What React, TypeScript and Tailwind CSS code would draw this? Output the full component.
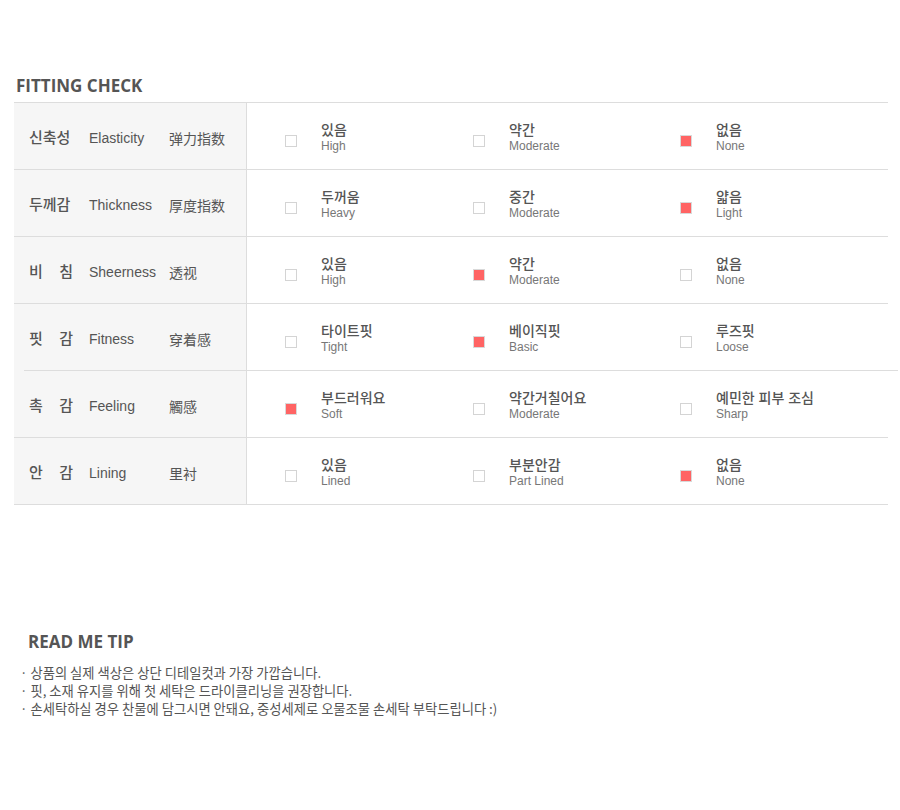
const rows = [
  {
    ko: "신축성",
    en: "Elasticity",
    zh: "弹力指数",
    opts: [
      { ko: "있음", en: "High" },
      { ko: "약간", en: "Moderate" },
      { ko: "없음", en: "None" },
    ],
    pick: 2,
  },
  {
    ko: "두께감",
    en: "Thickness",
    zh: "厚度指数",
    opts: [
      { ko: "두꺼움", en: "Heavy" },
      { ko: "중간", en: "Moderate" },
      { ko: "얇음", en: "Light" },
    ],
    pick: 2,
  },
  {
    ko: "비 침",
    en: "Sheerness",
    zh: "透视",
    opts: [
      { ko: "있음", en: "High" },
      { ko: "약간", en: "Moderate" },
      { ko: "없음", en: "None" },
    ],
    pick: 1,
  },
  {
    ko: "핏 감",
    en: "Fitness",
    zh: "穿着感",
    opts: [
      { ko: "타이트핏", en: "Tight" },
      { ko: "베이직핏", en: "Basic" },
      { ko: "루즈핏", en: "Loose" },
    ],
    pick: 1,
  },
  {
    ko: "촉 감",
    en: "Feeling",
    zh: "觸感",
    opts: [
      { ko: "부드러워요", en: "Soft" },
      { ko: "약간거칠어요", en: "Moderate" },
      { ko: "예민한 피부 조심", en: "Sharp" },
    ],
    pick: 0,
  },
  {
    ko: "안 감",
    en: "Lining",
    zh: "里衬",
    opts: [
      { ko: "있음", en: "Lined" },
      { ko: "부분안감", en: "Part Lined" },
      { ko: "없음", en: "None" },
    ],
    pick: 2,
  },
];

const colW = ["w-[188px]", "w-[207px]", "flex-1"];

function Label({ text }: { text: string }) {
  const parts = text.split(" ");
  if (parts.length === 2) {
    return (
      <div className="w-[44px] flex justify-between">
        <span>{parts[0]}</span>
        <span>{parts[1]}</span>
      </div>
    );
  }
  return <div>{text}</div>;
}

function Option({ ko, en, on, w }: { ko: string; en: string; on: boolean; w: string }) {
  return (
    <div className={`${w} flex items-center pt-[3px]`}>
      <div
        className={`mt-[6px] w-[12px] h-[12px] border ${
          on ? "bg-[#ff6464] border-[#d9d9d9]" : "bg-white border-[#d4d4d4]"
        }`}
      />
      <div className="ml-[24px] flex flex-col">
        <span className="text-[14px] leading-[16px] font-medium text-[#555]">{ko}</span>
        <span
          className="text-[12px] leading-[16px] text-[#777]"
          style={{ fontFamily: '"Liberation Sans", Arial, sans-serif' }}
        >
          {en}
        </span>
      </div>
    </div>
  );
}

export default function App() {
  return (
    <div
      className="w-[900px] h-[810px] bg-white"
      style={{ fontFamily: '"Liberation Sans", "Noto Sans CJK KR", sans-serif' }}
    >
      <div className="pt-[72px] px-[14px]">
        <h2
          className="pl-[2px] mb-[2px] text-[17px] leading-[28px] font-bold text-[#555]"
          style={{ fontFamily: '"Open Sans", sans-serif' }}
        >
          FITTING CHECK
        </h2>
        <div className="w-[874px] border-t border-[#ddd]">
          {rows.map((r, i) => (
            <div key={i}>
              <div className="h-[66px] flex">
                <div className="w-[233px] bg-[#f6f6f6] border-r border-[#ddd] flex items-center pl-[15px] pt-[5px] text-[#555]">
                  <div className="w-[60px] text-[15px] font-medium">
                    <Label text={r.ko} />
                  </div>
                  <div className="w-[80px] text-[14px]">{r.en}</div>
                  <div className="text-[14px]" style={{ fontFamily: '"Noto Sans CJK SC", sans-serif' }}>
                    {r.zh}
                  </div>
                </div>
                <div className="flex-1 flex pl-[38px]">
                  {r.opts.map((o, j) => (
                    <Option key={j} ko={o.ko} en={o.en} on={j === r.pick} w={colW[j]} />
                  ))}
                </div>
              </div>
              {i === 3 ? (
                <div className="h-px flex">
                  <div className="w-[10px] bg-[#f6f6f6]" />
                  <div className="flex-1 mr-[-10px] bg-[#ddd]" />
                </div>
              ) : (
                <div className="h-px bg-[#ddd]" />
              )}
            </div>
          ))}
        </div>

        <h2
          className="mt-[123px] pl-[14px] text-[17px] leading-[28px] font-bold text-[#555]"
          style={{ fontFamily: '"Open Sans", sans-serif' }}
        >
          READ ME TIP
        </h2>
        <ul
          className="mt-[8px] pl-[6px] text-[13.3px] leading-[18px] text-[#555]"
          style={{ fontFamily: '"Noto Sans CJK KR", sans-serif' }}
        >
          <li>· 상품의 실제 색상은 상단 디테일컷과 가장 가깝습니다.</li>
          <li>· 핏, 소재 유지를 위해 첫 세탁은 드라이클리닝을 권장합니다.</li>
          <li>· 손세탁하실 경우 찬물에 담그시면 안돼요, 중성세제로 오물조물 손세탁 부탁드립니다 :)</li>
        </ul>
      </div>
    </div>
  );
}
